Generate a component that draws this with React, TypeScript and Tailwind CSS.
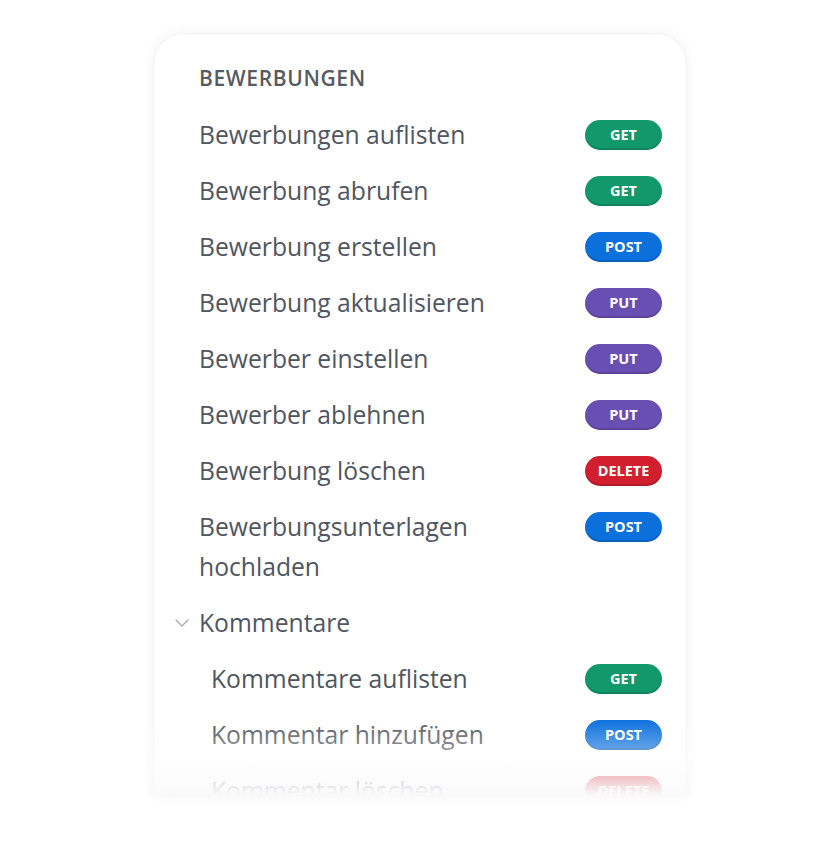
import { ChevronDown } from "lucide-react";

type Method = "GET" | "POST" | "PUT" | "DELETE";

const badgeClass: Record<Method, string> = {
  GET: "bg-[#12996b]",
  POST: "bg-[#0b70dc]",
  PUT: "bg-[#6a4fb2]",
  DELETE: "bg-[#d11f2f]",
};

const endpoints: { label: string; method: Method }[] = [
  { label: "Bewerbungen auflisten", method: "GET" },
  { label: "Bewerbung abrufen", method: "GET" },
  { label: "Bewerbung erstellen", method: "POST" },
  { label: "Bewerbung aktualisieren", method: "PUT" },
  { label: "Bewerber einstellen", method: "PUT" },
  { label: "Bewerber ablehnen", method: "PUT" },
  { label: "Bewerbung löschen", method: "DELETE" },
  { label: "Bewerbungsunterlagen hochladen", method: "POST" },
];

const comments: { label: string; method: Method }[] = [
  { label: "Kommentare auflisten", method: "GET" },
  { label: "Kommentar hinzufügen", method: "POST" },
  { label: "Kommentar löschen", method: "DELETE" },
];

function Badge({ method }: { method: Method }) {
  return (
    <div className="h-10 flex items-center shrink-0">
      <span
        className={`w-[77px] h-[30px] rounded-full flex items-center justify-center text-white text-[14.5px] font-bold shadow-[inset_0_-2px_0_rgba(0,0,0,0.14)] ${badgeClass[method]}`}
      >
        {method}
      </span>
    </div>
  );
}

function Row({ label, method, indent }: { label: string; method: Method; indent?: boolean }) {
  return (
    <div className="flex items-start gap-6 py-2">
      <div className={`flex-1 leading-[40px] text-[24.7px] text-[#4f5661] ${indent ? "pl-3" : ""}`}>{label}</div>
      <Badge method={method} />
    </div>
  );
}

export default function App() {
  return (
    <div className="min-h-screen bg-white pt-[33px]" style={{ fontFamily: "'Open Sans', 'Noto Sans', sans-serif" }}>
      <div className="relative mx-auto w-[534px]">
        <div className="h-[762px] overflow-hidden rounded-t-[30px] bg-white border border-[#f1f2f4] border-b-0 shadow-[0_0_14px_rgba(0,0,0,0.05)] pl-[45px] pr-[24px] pt-7">
          <div className="h-8 leading-8 mb-[13px] text-[21px] font-semibold text-[#555b63] tracking-[0.03em]">BEWERBUNGEN</div>
          {endpoints.map((e) => (
            <Row key={e.label} label={e.label} method={e.method} />
          ))}
          <div className="flex items-center h-14 -ml-[29px]">
            <ChevronDown className="w-[24px] h-[24px] mr-[5px] text-[#a3a8ae]" strokeWidth={1.2} />
            <span className="text-[24.7px] leading-[40px] text-[#4f5661]">Kommentare</span>
          </div>
          {comments.map((e) => (
            <Row key={e.label} label={e.label} method={e.method} indent />
          ))}
        </div>
        <div className="absolute -left-1 -right-1 bottom-0 h-[76px] bg-gradient-to-b from-white/0 via-white/45 to-[#fafafb]" />
      </div>
    </div>
  );
}
